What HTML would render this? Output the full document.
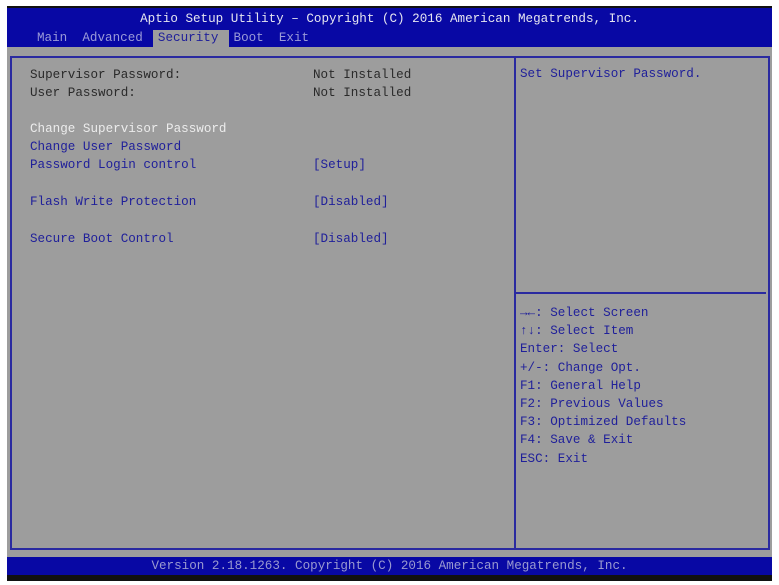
<!DOCTYPE html><html><head><style>
body{margin:0;width:779px;height:585px;background:#fff;position:relative;overflow:hidden;font-family:"Liberation Mono",monospace;font-size:12.6px}
div{position:absolute;white-space:pre;line-height:16px}
.b{color:#20209a}.k{color:#2a2a2a}.w{color:#ececec}
</style></head><body>
<div style="left:7px;top:6px;width:765px;height:2px;background:#111"></div>
<div style="left:7px;top:8px;width:765px;height:39px;background:#0808a4"></div>
<div style="left:7px;top:47px;width:765px;height:510px;background:#9d9d9d"></div>
<div style="left:7px;top:557px;width:765px;height:18px;background:#0808a4"></div>
<div style="left:7px;top:575px;width:765px;height:6px;background:#111"></div>
<div style="left:10px;top:56px;width:756px;height:490px;border:2px solid #2a2aa0"></div>
<div style="left:514px;top:56px;width:2px;height:492px;background:#2a2aa0"></div>
<div style="left:516px;top:292px;width:250px;height:2px;background:#2a2aa0"></div>
<div style="left:0;width:779px;top:11px;text-align:center;color:#e6e6f0">Aptio Setup Utility – Copyright (C) 2016 American Megatrends, Inc.</div>
<div style="left:153px;top:30px;width:76px;height:17px;background:#9d9d9d"></div>
<div style="left:37px;top:30px;color:#9a9ad8">Main  Advanced  <span style="color:#20209a">Security</span>  Boot  Exit</div>
<div class="k" style="left:30px;top:67px">Supervisor Password:</div>
<div class="k" style="left:313px;top:67px">Not Installed</div>
<div class="k" style="left:30px;top:85px">User Password:</div>
<div class="k" style="left:313px;top:85px">Not Installed</div>
<div class="w" style="left:30px;top:121px">Change Supervisor Password</div>
<div class="b" style="left:30px;top:139px">Change User Password</div>
<div class="b" style="left:30px;top:157px">Password Login control</div>
<div class="b" style="left:313px;top:157px">[Setup]</div>
<div class="b" style="left:30px;top:194px">Flash Write Protection</div>
<div class="b" style="left:313px;top:194px">[Disabled]</div>
<div class="b" style="left:30px;top:231px">Secure Boot Control</div>
<div class="b" style="left:313px;top:231px">[Disabled]</div>
<div class="b" style="left:520px;top:66px">Set Supervisor Password.</div>
<div class="b" style="left:520px;top:304px;line-height:18.2px">→←: Select Screen
↑↓: Select Item
Enter: Select
+/-: Change Opt.
F1: General Help
F2: Previous Values
F3: Optimized Defaults
F4: Save &amp; Exit
ESC: Exit</div>
<div style="left:0;width:779px;top:558px;text-align:center;color:#9a9ad0">Version 2.18.1263. Copyright (C) 2016 American Megatrends, Inc.</div>
</body></html>
